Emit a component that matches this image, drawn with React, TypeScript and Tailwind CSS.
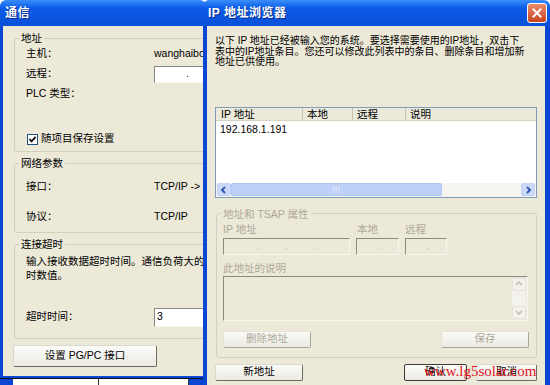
import React from 'react';

const sunken =
  'border border-t-[#8c8a80] border-l-[#8c8a80] border-b-[#f7f6f1] border-r-[#f7f6f1]';

const TitleBar: React.FC<{ title: string; children?: React.ReactNode }> = ({ title, children }) => (
  <div className="h-[26px] shrink-0 flex items-center justify-between rounded-t-[6px] bg-linear-to-b from-[#3a8df8] from-0% via-[#0b5ce8] via-30% to-[#0a50d8] pl-[5px] pr-[3px]">
    <span className="text-white font-bold text-[12px] tracking-[0.5px] [text-shadow:1px_1px_0_#0a2f8c]">
      {title}
    </span>
    {children}
  </div>
);

// legend sits on the top border; children get their own padding box
const Group: React.FC<{ title: string; disabled?: boolean; className?: string; inner?: string; children: React.ReactNode }> = ({
  title,
  disabled,
  className,
  inner,
  children,
}) => (
  <fieldset className={`border border-[#d0d0bf] rounded-[3px] min-w-0 ${className ?? ''}`}>
    <legend
      className={`ml-[4px] px-[2px] leading-[12px] ${disabled ? 'text-[#aca899]' : 'text-black'}`}
    >
      {title}
    </legend>
    <div className={inner}>{children}</div>
  </fieldset>
);

const Btn: React.FC<{ label: string; width: string; disabled?: boolean; strong?: boolean; height?: string }> = ({
  label,
  width,
  disabled,
  strong,
  height,
}) => (
  <div
    className={`${width} ${height ?? 'h-[17px]'} flex items-center justify-center rounded-[2px] border bg-linear-to-b from-[#fbfbf8] to-[#ebeae2] ${
      disabled
        ? 'border-t-[#e4e2d8] border-l-[#e4e2d8] border-b-[#a8a698] border-r-[#a8a698] text-[#aca899]'
        : strong
        ? 'border-[#3a3a3a] text-black'
        : 'border-t-[#dcdad0] border-l-[#dcdad0] border-b-[#6e6c62] border-r-[#6e6c62] text-black'
    }`}
  >
    {label}
  </div>
);

const Row: React.FC<{ label: string; children?: React.ReactNode }> = ({ label, children }) => (
  <div className="h-[20px] flex items-center pl-[11px]">
    <span className="w-[128px] shrink-0">{label}</span>
    {children}
  </div>
);

const BackWindow: React.FC = () => (
  <div className="absolute left-0 top-0 w-[206px] h-[378px] flex flex-col overflow-hidden">
    <TitleBar title="通信" />
    <div className="flex-1 bg-[#ece9d8] border-l-[3px] border-b-[2px] border-[#0a46d4] pl-[11px] pt-[6px] flex flex-col">
      <Group title="地址" className="-mr-[60px]" inner="pb-[3px]">
        <Row label="主机：">
          <span>wanghaibo</span>
        </Row>
        <Row label="远程：">
          <div className={`w-[80px] h-[17px] bg-white ${sunken} flex items-center pl-[31px]`}>.</div>
        </Row>
        <Row label="PLC 类型：" />
        <div className="h-[26px]" />
        <div className="h-[18px] flex items-center pl-[12px] gap-[2px]">
          <div className="w-[11px] h-[11px] bg-white border border-[#1c5180] flex items-center justify-center">
            <svg width="9" height="9" viewBox="0 0 9 9">
              <path d="M1.5 4.2 L3.6 6.4 L7.6 1.8" fill="none" stroke="#111" strokeWidth="1.8" />
            </svg>
          </div>
          <span className="ml-[1px]">随项目保存设置</span>
        </div>
      </Group>

      <Group title="网络参数" className="mt-[5px] -mr-[60px]" inner="pt-[8px] pb-[5px] flex flex-col gap-[10px]">
        <Row label="接口：">
          <span className="whitespace-nowrap">TCP/IP -&gt; Re</span>
        </Row>
        <Row label="协议：">
          <span>TCP/IP</span>
        </Row>
      </Group>

      <Group title="连接超时" className="mt-[5px] -mr-[60px]" inner="pt-[4px] pb-[11px]">
        <div className="pl-[11px] leading-[14px] whitespace-nowrap">
          <div>输入接收数据超时时间。通信负荷大的连</div>
          <div>时数值。</div>
        </div>
        <div className="mt-[25px]">
          <Row label="超时时间：">
            <div className={`w-[80px] h-[19px] bg-white ${sunken} flex items-center pl-[2px]`}>3</div>
          </Row>
        </div>
      </Group>

      <div className="mt-[6px] -ml-[1px]">
        <Btn label="设置 PG/PC 接口" width="w-[144px]" height="h-[22px]" />
      </div>
    </div>
  </div>
);

const Arrow: React.FC<{ dir: 'left' | 'right' | 'up' | 'down'; pale?: boolean }> = ({ dir, pale }) => {
  const d =
    dir === 'left'
      ? 'M6 2 L3 5 L6 8'
      : dir === 'right'
      ? 'M4 2 L7 5 L4 8'
      : dir === 'up'
      ? 'M2 6 L5 3 L8 6'
      : 'M2 4 L5 7 L8 4';
  return (
    <div
      className={`w-[14px] h-[13px] shrink-0 flex items-center justify-center rounded-[2px] border ${
        pale ? 'border-[#e4e2d8] bg-[#f3f2ec]' : 'border-[#c2d2f4] bg-[#c9d8f8]'
      }`}
    >
      <svg width="10" height="10" viewBox="0 0 10 10">
        <path d={d} fill="none" stroke={pale ? '#c9c7bb' : '#3052a8'} strokeWidth="1.8" />
      </svg>
    </div>
  );
};

const DisabledBox: React.FC<{ width: string; dots: number }> = ({ width, dots }) => (
  <div className={`${width} h-[17px] ${sunken} flex items-center justify-around px-[20px] text-[#c5c3b6]`}>
    {Array.from({ length: dots }).map((_, i) => (
      <span key={i}>.</span>
    ))}
  </div>
);

const FrontWindow: React.FC = () => (
  <div className="absolute left-[203px] top-0 w-[347px] h-[385px] flex flex-col">
    <TitleBar title="IP 地址浏览器">
      <div className="w-[20px] h-[20px] rounded-[3px] border border-white bg-linear-to-b from-[#e98a6c] to-[#c8421d] flex items-center justify-center">
        <svg width="12" height="12" viewBox="0 0 12 12">
          <path d="M2.5 2.5 L9.5 9.5 M9.5 2.5 L2.5 9.5" stroke="white" strokeWidth="2" strokeLinecap="square" />
        </svg>
      </div>
    </TitleBar>
    <div className="flex-1 bg-[#ece9d8] border-l-[4px] border-r-[5px] border-[#0a46d4] px-[8px] pt-[10px] flex flex-col">
      <div className="text-[10px] leading-[10.5px] whitespace-nowrap">
        <div>以下 IP 地址已经被输入您的系统。要选择需要使用的IP地址，双击下</div>
        <div>表中的IP地址条目。您还可以修改此列表中的条目、删除条目和增加新</div>
        <div>地址已供使用。</div>
      </div>

      <div className="mt-[39px] h-[91px] bg-white border border-[#7f9db9] flex flex-col">
        <div className="h-[13px] shrink-0 flex bg-[#ebeadb] border-b border-[#d6d2c2] leading-[12px]">
          <div className="w-[87px] pl-[5px] border-r border-[#c7c5b2]">IP 地址</div>
          <div className="w-[50px] pl-[4px] border-r border-[#c7c5b2]">本地</div>
          <div className="w-[53px] pl-[4px] border-r border-[#c7c5b2]">远程</div>
          <div className="flex-1 pl-[4px]">说明</div>
        </div>
        <div className="h-[14px] mt-[1px] pl-[4px] leading-[14px]">192.168.1.191</div>
        <div className="mt-auto h-[14px] flex items-center bg-[#f5f4ef] px-px">
          <Arrow dir="left" />
          <div className="w-[211px] h-[13px] rounded-[2px] bg-[#bdd0f7] border border-[#b0c6f2] flex items-center justify-center">
            <span className="text-[7px] text-[#eef3ff] tracking-[1px]">|||</span>
          </div>
          <div className="flex-1" />
          <Arrow dir="right" />
        </div>
      </div>

      <Group title="地址和 TSAP 属性" disabled className="mt-[10px] ml-[1px]" inner="pt-[3px] pb-[9px] pl-[6px] pr-[7px]">
        <div className="flex gap-[6px] text-[#aca899]">
          <div className="flex flex-col gap-[3px]">
            <span className="leading-[12px]">IP 地址</span>
            <DisabledBox width="w-[127px]" dots={3} />
          </div>
          <div className="flex flex-col gap-[3px]">
            <span className="leading-[12px] pl-[1px]">本地</span>
            <DisabledBox width="w-[43px]" dots={1} />
          </div>
          <div className="flex flex-col gap-[3px]">
            <span className="leading-[12px]">远程</span>
            <DisabledBox width="w-[42px]" dots={1} />
          </div>
        </div>
        <div className="mt-[7px] leading-[12px] text-[#aca899]">此地址的说明</div>
        <div className={`mt-[2px] w-[305px] h-[45px] ${sunken} flex justify-end p-px`}>
          <div className="flex flex-col justify-between bg-[#f3f2ec]">
            <Arrow dir="up" pale />
            <Arrow dir="down" pale />
          </div>
        </div>
        <div className="mt-[10px] flex justify-between">
          <Btn label="删除地址" width="w-[88px]" disabled />
          <Btn label="保存" width="w-[88px]" disabled />
        </div>
      </Group>

      <div className="mt-[6px] flex items-center">
        <Btn label="新地址" width="w-[88px]" />
        <div className="flex-1" />
        <Btn label="确认" width="w-[63px]" strong />
        <div className="w-[9px]" />
        <Btn label="取消" width="w-[61px]" />
      </div>
    </div>
  </div>
);

export default function App() {
  return (
    <div className="relative w-[550px] h-[385px] overflow-hidden bg-white text-[10.5px] text-black font-['Liberation_Sans','Noto_Sans_CJK_SC',sans-serif]">
      <BackWindow />
      <div className="absolute left-0 top-[378px] w-[203px] h-[7px] flex border-t border-[#111]">
        <div className="w-[13px] bg-[#0a46d4]" />
        <div className="w-[86px] bg-white border-r border-[#333]" />
        <div className="w-[90px] bg-white border-r border-[#333]" />
        <div className="flex-1 bg-[#0a46d4]" />
      </div>
      <FrontWindow />
      <div className="absolute left-[424px] top-[362px] text-[15px] leading-[18px] text-[#e0141e] font-['Liberation_Serif',serif]">
        www.lg5solar.com
      </div>
    </div>
  );
}
